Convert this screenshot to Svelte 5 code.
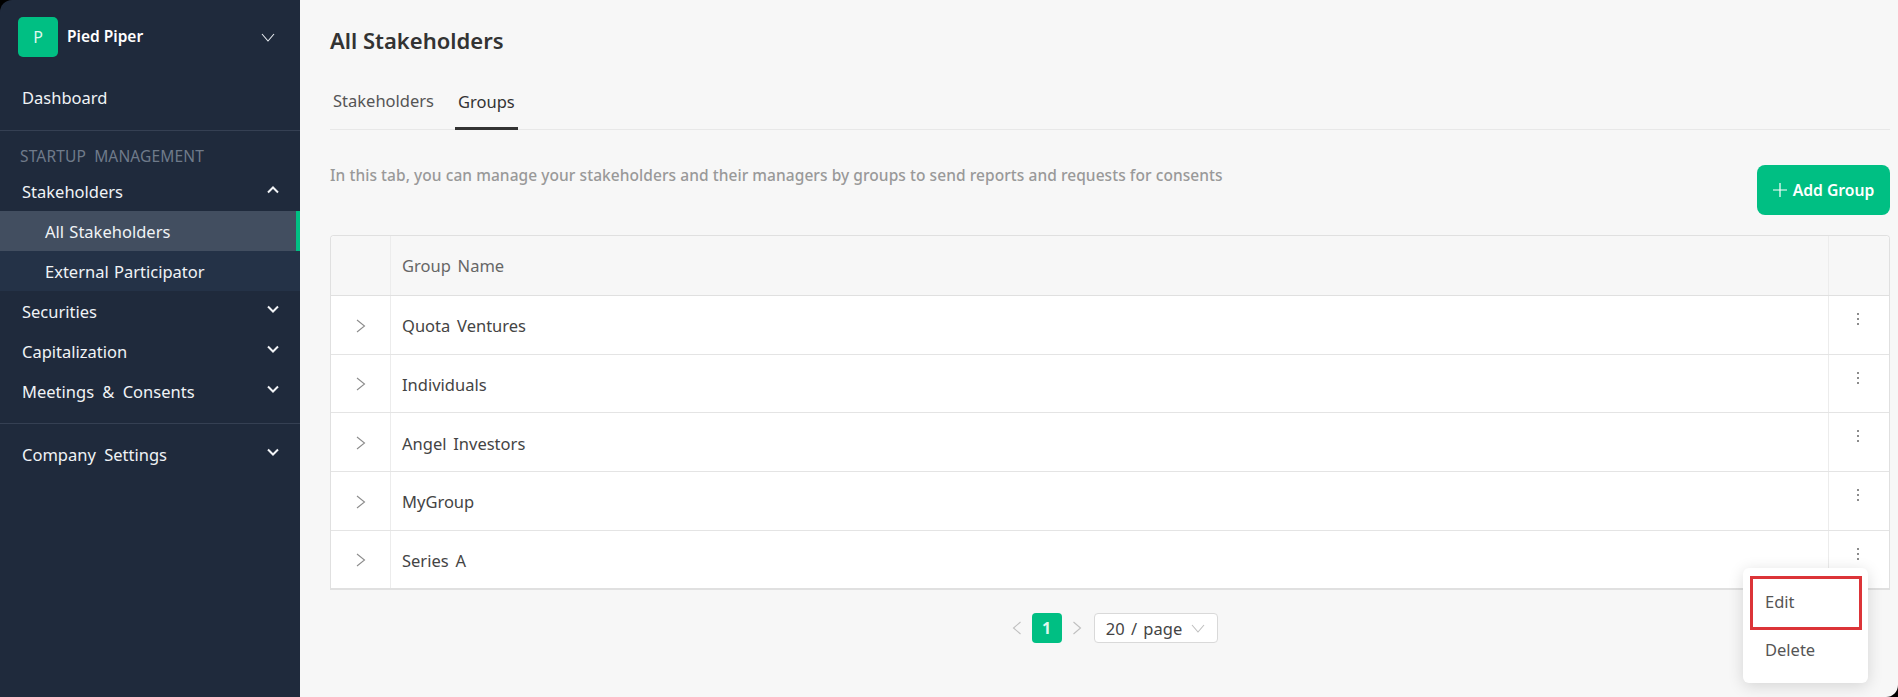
<script>
  const groups = ['Quota Ventures', 'Individuals', 'Angel Investors', 'MyGroup', 'Series A'];
</script>

<div class="frame">
  <aside class="sidebar">
    <div class="brand">
      <span class="logo">P</span>
      <span class="brand-name">Pied Piper</span>
      <svg class="brand-caret" width="14" height="9" viewBox="0 0 14 9"><path d="M1 1l6 7 6-7" fill="none" stroke="#e8ecf1" stroke-width="1.1"/></svg>
    </div>
    <div class="dash">Dashboard</div>
    <div class="rule"></div>
    <div class="section">STARTUP MANAGEMENT</div>
    <div class="item"><span>Stakeholders</span><svg class="chev" width="12" height="8" viewBox="0 0 12 8"><path d="M1 6.500l5-5 5 5" fill="none" stroke="#f2f4f7" stroke-width="2"/></svg></div>
    <div class="sub active">All Stakeholders</div>
    <div class="sub">External Participator</div>
    {#each ['Securities', 'Capitalization', 'Meetings & Consents'] as label}
      <div class="item"><span>{label}</span><svg class="chev down" width="12" height="8" viewBox="0 0 12 8"><path d="M1 1.500l5 5 5-5" fill="none" stroke="#f2f4f7" stroke-width="2"/></svg></div>
    {/each}
    <div class="rule second"></div>
    <div class="item company"><span>Company Settings</span><svg class="chev down" width="12" height="8" viewBox="0 0 12 8"><path d="M1 1.500l5 5 5-5" fill="none" stroke="#f2f4f7" stroke-width="2"/></svg></div>
  </aside>

  <main class="main">
    <h1>All Stakeholders</h1>
    <nav class="tabs">
      <span class="tab">Stakeholders</span>
      <span class="tab on">Groups</span>
    </nav>
    <div class="intro">
      <p>In this tab, you can manage your stakeholders and their managers by groups to send reports and requests for consents</p>
      <button class="add">
        <svg width="16" height="16" viewBox="0 0 16 16"><path d="M8 1v14M1 8h14" stroke="#fff" stroke-width="1.2" fill="none"/></svg>
        Add Group
      </button>
    </div>

    <div class="table">
      <div class="row head">
        <div class="c1"></div>
        <div class="c2">Group Name</div>
        <div class="c3"></div>
      </div>
      {#each groups as g}
        <div class="row">
          <div class="c1"><svg width="10" height="14" viewBox="0 0 10 14"><path d="M1 1l7.500 6L1 13" fill="none" stroke="#8c8c8c" stroke-width="1.1"/></svg></div>
          <div class="c2">{g}</div>
          <div class="c3"><span class="dots"><i></i><i></i><i></i></span></div>
        </div>
      {/each}
    </div>

    <div class="pager">
      <svg width="10" height="14" viewBox="0 0 10 14"><path d="M8.500 1L1.500 7l7 6" fill="none" stroke="#bfbfbf" stroke-width="1.1"/></svg>
      <span class="page">1</span>
      <svg width="10" height="14" viewBox="0 0 10 14"><path d="M1.500 1l7 6-7 6" fill="none" stroke="#bfbfbf" stroke-width="1.1"/></svg>
      <span class="size">20 / page
        <svg width="14" height="9" viewBox="0 0 14 9"><path d="M1 1l6 7 6-7" fill="none" stroke="#bfbfbf" stroke-width="1.1"/></svg>
      </span>
    </div>

    <div class="menu">
      <div class="mi">Edit</div>
      <div class="mi">Delete</div>
      <div class="mark"></div>
    </div>
  </main>
</div>

<style>
  :global(body) { margin: 0; background: #000; }
  .frame {
    display: flex;
    height: 697px;
    width: 1898px;
    overflow: hidden;
    font-family: "Noto Sans", sans-serif;
    font-size: 16.5px;
    background: #000;
  }
  .sidebar {
    width: 300px;
    flex: none;
    background: #1f2a3c;
    color: #f0f3f6;
    border-top-left-radius: 12px;
    display: flex;
    flex-direction: column;
    word-spacing: 4px;
  }
  .brand { display: flex; align-items: center; height: 40px; margin-top: 17px; padding-left: 18px; }
  .logo {
    width: 40px; height: 40px; border-radius: 5px; background: #00bf83; color: #dff8ee;
    display: flex; align-items: center; justify-content: center; font-size: 16px;
  }
  .brand-name { margin-left: 9px; font-weight: 600; font-size: 15.5px; color: #fff; margin-top: -3px; word-spacing: 0; }
  .brand-caret { margin-left: auto; margin-right: 25px; }
  .dash { height: 40px; line-height: 40px; margin-top: 21px; padding-left: 22px; }
  .rule { height: 1px; background: #354053; margin-top: 12px; }
  .section { height: 26px; line-height: 26px; margin-top: 12px; padding-left: 20px; font-size: 15.5px; color: #6f7a8a; letter-spacing: .15px; word-spacing: 4px; }
  .item {
    height: 40px; display: flex; align-items: center; justify-content: space-between;
    padding: 0 21px 0 22px;
  }
  .section + .item { margin-top: 2px; }
  .chev { margin-top: -2px; }
  .down { margin-top: -5px; }
  .sub { height: 40px; line-height: 41px; padding-left: 45px; background: #243247; word-spacing: 1px; }
  .sub.active { background: #424e60; border-right: 4px solid #00bf83; }
  .rule.second { margin-top: 12px; }
  .company { margin-top: 10px; }

  .main {
    position: relative;
    flex: 1;
    min-width: 0;
    background: #f7f7f7;
    border-bottom-right-radius: 12px;
    padding: 0 8px 0 30px;
    color: #333;
  }
  h1 { margin: 0; padding-top: 24px; font-size: 22px; line-height: 32px; font-weight: 600; color: #333; }
  .tabs { display: flex; height: 74px; box-sizing: border-box; margin-top: 0; border-bottom: 1px solid #e8e8e8; align-items: flex-end; }
  .tab { padding: 0 3px 10px; height: 46px; line-height: 36px; margin-right: 18px; color: #555; box-sizing: border-box; }
  .tab.on { color: #333; border-bottom: 3px solid #333; margin-bottom: -1px; padding-bottom: 7px; }
  .intro { display: flex; justify-content: space-between; align-items: flex-start; margin-top: 35px; }
  .intro p { margin: 0; margin-top: -2px; font-size: 15.5px; line-height: 24px; font-weight: 500; color: #999; letter-spacing: .06px; }
  .add {
    width: 133px; height: 50px; border: 0; border-radius: 8px; background: #00bf83; color: #fff;
    font: 600 15.7px "Noto Sans", sans-serif; display: flex; align-items: center; justify-content: center; gap: 5px; padding: 0 1px 0 0;
  }
  .table { margin-top: 20px; border: 1px solid #e0e0e0; border-bottom-width: 2px; border-radius: 4px 4px 0 0; background: #fff; }
  .row { display: flex; height: 58.67px; border-top: 1px solid #e4e4e4; box-sizing: border-box; word-spacing: 2.5px; }
  .row:first-child { border-top: 0; }
  .row.head { background: #f7f7f7; height: 60px; border-radius: 4px 4px 0 0; border-bottom: 1px solid #e0e0e0; color: #666; }
  .row.head + .row { border-top: 0; height: 57.67px; }
  .c1 { width: 59px; flex: none; display: flex; align-items: center; justify-content: center; padding: 2px 0 0 1px; box-sizing: border-box; }
  .c2 { flex: 1; display: flex; align-items: center; padding: 2px 0 0 11px; box-sizing: border-box; border-left: 1px solid #ececec; color: #444; }
  .head .c2 { color: #666; padding-top: 0; }
  .c3 { width: 61px; flex: none; border-left: 1px solid #ececec; display: flex; justify-content: center; padding: 17px 2px 0 0; box-sizing: border-box; }
  .dots { display: flex; flex-direction: column; gap: 3px; align-items: center; height: 14px; }
  .dots i { width: 2px; height: 2px; background: #666; border-radius: 50%; display: block; }
  .pager { display: flex; align-items: center; justify-content: center; margin-top: 23px; padding-left: 9px; }
  .page {
    width: 30px; height: 30px; margin: 0 10px; border-radius: 4px; background: #00bf83; color: #dff8ee;
    font-weight: 700; font-size: 16px; display: flex; align-items: center; justify-content: center;
  }
  .size {
    margin-left: 12px; width: 124px; height: 30px; box-sizing: border-box; border: 1px solid #d9d9d9; border-radius: 4px;
    background: #fff; display: flex; align-items: center; justify-content: center; gap: 9px; color: #444; word-spacing: 2px;
  }
  .menu {
    position: absolute; left: 1443px; top: 568px; width: 125px; height: 115px; box-sizing: border-box;
    padding: 10px 0 6px; background: #fff; border-radius: 6px; box-shadow: 0 3px 16px rgba(0,0,0,.14);
  }
  .mi { height: 48px; line-height: 48px; padding-left: 22px; color: #555; }
  .mark { position: absolute; left: 7px; top: 8px; width: 112px; height: 54px; box-sizing: border-box; border: 3px solid #dc3438; }
</style>
